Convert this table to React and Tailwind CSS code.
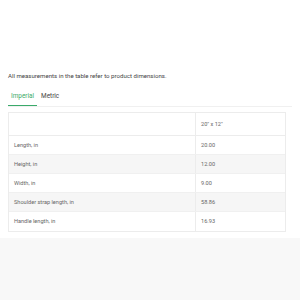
const rows = [
  ['Length, in', '20.00'],
  ['Height, in', '12.00'],
  ['Width, in', '9.00'],
  ['Shoulder strap length, in', '58.86'],
  ['Handle length, in', '16.93'],
]

export default function App() {
  return (
    <div className="w-[300px] h-[300px] bg-white flex flex-col font-['Roboto',sans-serif] text-[#333]">
      <div className="h-[238px] bg-white px-[8px] pt-[71px]">
        <p className="text-[6.1px] leading-[9px] text-[#444]">
          All measurements in the table refer to product dimensions.
        </p>

        {/* tabs */}
        <div className="mt-[12px] flex gap-[4px] border-b border-[#f0f0f0] text-[6.4px] leading-[9px]">
          <div className="px-[3px] pb-[4px] text-[#3aaa6a] border-b-[1.5px] border-[#3aaa6a]">Imperial</div>
          <div className="pb-[4px] text-[#444]">Metric</div>
        </div>

        <div className="mt-[5px] mr-[6px] border border-[#ececec] text-[5.6px] text-[#666]">
          <div className="flex h-[23px] border-b border-[#ececec]">
            <div className="w-[187px] border-r border-[#ececec]" />
            <div className="flex-1 flex items-center pl-[5px]">20" x 12"</div>
          </div>
          {rows.map(([label, value], i) => (
            <div
              key={label}
              className={`flex h-[19px] ${i % 2 === 1 ? 'bg-[#f6f6f6]' : 'bg-white'} ${i < rows.length - 1 ? 'border-b border-[#f0f0f0]' : ''}`}
            >
              <div className="w-[187px] flex items-center pl-[5px] border-r border-[#ececec]">{label}</div>
              <div className="flex-1 flex items-center pl-[5px]">{value}</div>
            </div>
          ))}
        </div>
      </div>
      <div className="flex-1 bg-[#f8f8f8]" />
    </div>
  )
}
